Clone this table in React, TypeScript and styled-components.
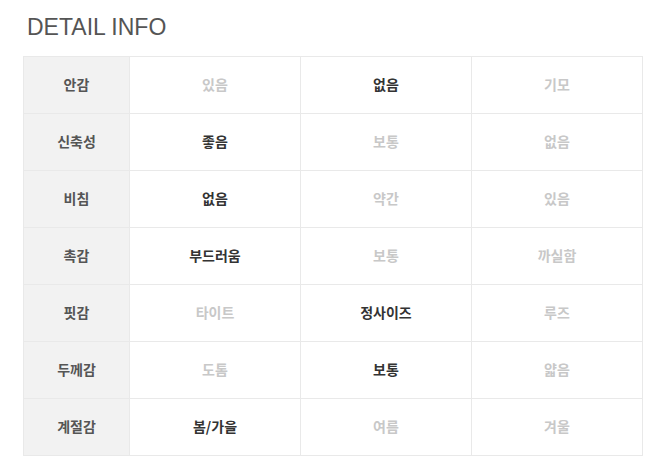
import styled, { createGlobalStyle } from 'styled-components'

const GlobalStyle = createGlobalStyle`
  body {
    margin: 0;
    background: #fff;
    font-family: 'Liberation Sans', 'Noto Sans CJK KR', sans-serif;
  }
`

const DETAIL_ROWS = [
  { label: '안감', options: ['있음', '없음', '기모'], selected: 1 },
  { label: '신축성', options: ['좋음', '보통', '없음'], selected: 0 },
  { label: '비침', options: ['없음', '약간', '있음'], selected: 0 },
  { label: '촉감', options: ['부드러움', '보통', '까실함'], selected: 0 },
  { label: '핏감', options: ['타이트', '정사이즈', '루즈'], selected: 1 },
  { label: '두께감', options: ['도톰', '보통', '얇음'], selected: 1 },
  { label: '계절감', options: ['봄/가을', '여름', '겨울'], selected: 0 },
]

const Section = styled.section`
  padding: 12px 0 0 23px;
`
const Title = styled.h2`
  margin: 0 0 14px 4px;
  font-family: 'Liberation Sans', Arial, sans-serif;
  font-size: 23px;
  line-height: 30px;
  font-weight: 400;
  color: #555;
`
const Table = styled.table`
  width: 620px;
  border-collapse: collapse;
  table-layout: fixed;
  font-family: 'Noto Sans CJK KR', 'Liberation Sans', sans-serif;
  font-size: 14px;
`
const Label = styled.th`
  width: 105px;
  height: 54px;
  padding: 0 0 2px;
  background: #f2f2f2;
  border: 1px solid #e9e9e9;
  color: #555;
  font-weight: 700;
  text-align: center;
`
const Cell = styled.td<{ $active: boolean }>`
  height: 54px;
  padding: 0 0 2px;
  border: 1px solid #e9e9e9;
  text-align: center;
  font-weight: 700;
  color: ${(props) => (props.$active ? '#333' : '#c8c8c8')};
`

export default function App() {
  return (
    <>
      <GlobalStyle />
      <Section>
        <Title>DETAIL INFO</Title>
        <Table>
          <tbody>
            {DETAIL_ROWS.map((row) => (
              <tr key={row.label}>
                <Label>{row.label}</Label>
                {row.options.map((option, i) => (
                  <Cell key={option} $active={i === row.selected}>
                    {option}
                  </Cell>
                ))}
              </tr>
            ))}
          </tbody>
        </Table>
      </Section>
    </>
  )
}
